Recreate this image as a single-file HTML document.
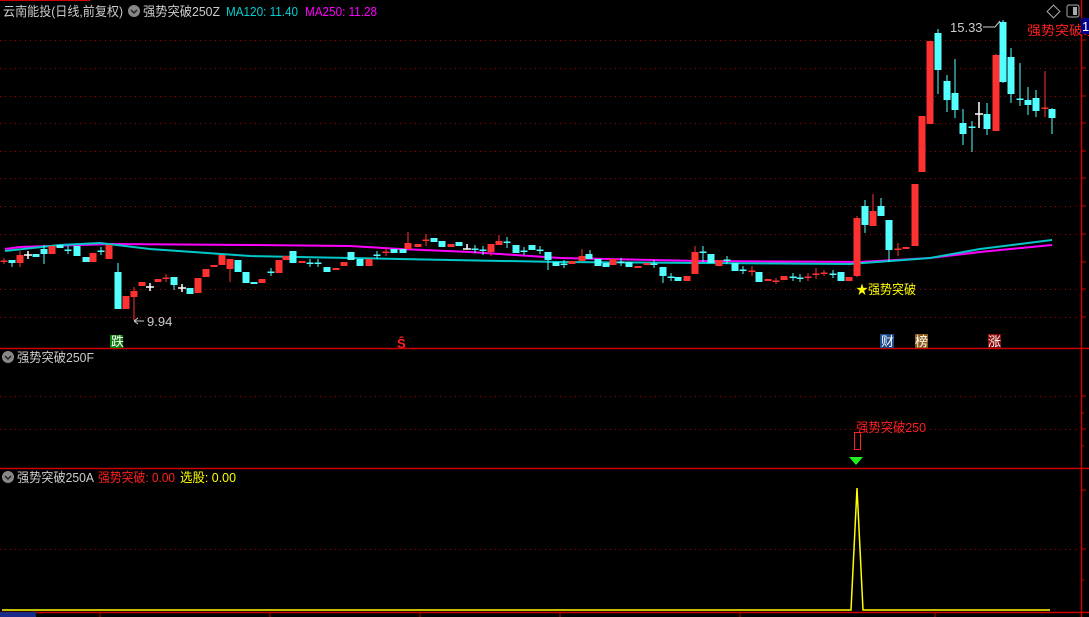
<!DOCTYPE html>
<html><head><meta charset="utf-8"><style>
body{margin:0;background:#000;width:1089px;height:617px;overflow:hidden}
svg{display:block}
text{font-family:"Liberation Sans","Noto Sans CJK SC",sans-serif;font-size:13px}
</style></head><body>
<svg width="1089" height="617" viewBox="0 0 1089 617" xmlns="http://www.w3.org/2000/svg">
<rect width="1089" height="617" fill="#000"/>
<line x1="0" y1="0.5" x2="90" y2="0.5" stroke="#c00"/>
<g stroke="#a00000" stroke-dasharray="1 4" stroke-width="1">
<line x1="0" y1="40.5" x2="1080" y2="40.5"/><line x1="0" y1="68.5" x2="1080" y2="68.5"/><line x1="0" y1="96.5" x2="1080" y2="96.5"/><line x1="0" y1="123.5" x2="1080" y2="123.5"/><line x1="0" y1="151.5" x2="1080" y2="151.5"/><line x1="0" y1="178.5" x2="1080" y2="178.5"/><line x1="0" y1="206.5" x2="1080" y2="206.5"/><line x1="0" y1="234.5" x2="1080" y2="234.5"/><line x1="0" y1="289.5" x2="1080" y2="289.5"/><line x1="0" y1="317.5" x2="1080" y2="317.5"/>
<line x1="0" y1="396.5" x2="1080" y2="396.5"/><line x1="0" y1="429.5" x2="1080" y2="429.5"/>
<line x1="0" y1="549.5" x2="1080" y2="549.5"/>
</g>
<g stroke="#c00" stroke-width="1.5">
<line x1="0" y1="348.5" x2="1089" y2="348.5"/><line x1="0" y1="468.5" x2="1089" y2="468.5"/><line x1="0" y1="612.5" x2="1089" y2="612.5"/>
<line x1="1081.5" y1="0" x2="1081.5" y2="617"/>
</g>
<g stroke="#c00"><path d="M1081 40h5M1081 68h5M1081 96h5M1081 123h5M1081 151h5M1081 178h5M1081 206h5M1081 234h5M1081 262h5M1081 289h5M1081 317h5M1081 396h5M1081 413h3M1081 429h5M1081 446h3M1081 490h5M1081 549h5M1081 580h3M100 612v5M270 612v5M420 612v5M560 612v5M740 612v5M935 612v5"/></g>
<polyline fill="none" stroke="#ff00ff" stroke-width="2" points="5,249 20,247 110,244 250,245 350,246 400,249 470,252 560,258 700,261 860,262 930,258 980,252 1052,245"/>
<polyline fill="none" stroke="#00c8c8" stroke-width="2" points="5,251 60,245 100,243 150,249 250,256 350,258 450,260 560,262 700,263 850,264 930,258 980,249 1052,240"/>
<g fill="#ff3232" stroke="#ff3232" stroke-width="1">
<path fill="none" d="M20 251V267M134 287V320M230 259V282M408 232V249M426 234V246M491 244V256M499 235V245M582 249V261M695 246V274M873 194V226M1045 71V117M752 266V276M898 243V256M816 268V279M857 216V277M996 54V131M166 274V282M386 248V256M776 278V284M808 273V281M824 270V276M4 258V264"/>
<g stroke="none">
<rect x="16.5" y="255" width="7" height="8"/><rect x="48.5" y="246" width="7" height="8"/><rect x="89.5" y="253" width="7" height="9"/><rect x="105.5" y="245" width="7" height="14"/><rect x="122.5" y="296" width="7" height="13"/><rect x="130.5" y="291" width="7" height="6"/><rect x="138.5" y="282" width="7" height="4"/><rect x="154.5" y="279" width="7" height="3"/><rect x="194.5" y="278" width="7" height="15"/><rect x="202.5" y="269" width="7" height="8"/><rect x="210.5" y="265" width="7" height="2"/><rect x="218.5" y="255" width="7" height="10"/><rect x="226.5" y="259" width="7" height="10"/><rect x="258.5" y="279" width="7" height="4"/><rect x="275.5" y="260" width="7" height="13"/><rect x="282.5" y="256" width="7" height="4"/><rect x="298.5" y="261" width="7" height="2"/><rect x="332.5" y="268" width="7" height="2"/><rect x="340.5" y="262" width="7" height="4"/><rect x="365.5" y="259" width="7" height="7"/><rect x="404.5" y="243" width="7" height="6"/><rect x="414.5" y="244" width="7" height="3"/><rect x="447.5" y="244" width="7" height="3"/><rect x="487.5" y="244" width="7" height="8"/><rect x="495.5" y="241" width="7" height="4"/><rect x="568.5" y="261" width="7" height="3"/><rect x="578.5" y="256" width="7" height="5"/><rect x="609.5" y="259" width="7" height="6"/><rect x="634.5" y="266" width="7" height="2"/><rect x="643.5" y="263" width="7" height="2"/><rect x="683.5" y="276" width="7" height="5"/><rect x="691.5" y="252" width="7" height="22"/><rect x="715.5" y="260" width="7" height="6"/><rect x="764.5" y="279" width="7" height="2"/><rect x="780.5" y="276" width="7" height="4"/><rect x="845.5" y="277" width="7" height="4"/><rect x="853.5" y="218" width="7" height="58"/><rect x="869.5" y="211" width="7" height="15"/><rect x="902.5" y="247" width="7" height="2"/><rect x="911.5" y="184" width="7" height="62"/><rect x="918.5" y="116" width="7" height="56"/><rect x="926.5" y="41" width="7" height="83"/><rect x="992.5" y="55" width="7" height="76"/>
<rect x="0.5" y="260.5" width="7" height="1.5"/><rect x="162.5" y="277.5" width="7" height="1.5"/><rect x="382.5" y="251.5" width="7" height="1.5"/><rect x="422.5" y="239.5" width="7" height="1.5"/><rect x="748.5" y="270.5" width="7" height="1.5"/><rect x="772.5" y="280.5" width="7" height="1.5"/><rect x="804.5" y="276.5" width="7" height="1.5"/><rect x="812.5" y="273.5" width="7" height="1.5"/><rect x="820.5" y="272.5" width="7" height="1.5"/><rect x="894.5" y="248.5" width="7" height="1.5"/><rect x="1041.5" y="107.5" width="7" height="1.5"/>
</g></g>
<g fill="#54ffff" stroke="#54ffff" stroke-width="1">
<path fill="none" d="M44 245V264M118 263V309M548 252V270M663 267V283M865 200V233M881 198V216M889 220V262M938 29V94M947 75V112M955 59V118M963 109V145M972 121V152M987 103V135M1003 20V83M1011 48V103M1020 63V106M1028 87V115M1036 90V117M1052 108V134M703 246V262M507 237V248M12 260V267M68 246V254M101 247V255M271 268V276M310 259V267M318 259V267M377 251V259M475 245V253M483 246V255M524 247V255M540 246V254M564 260V268M621 258V266M654 260V268M671 273V281M727 256V264M743 266V274M793 273V281M800 274V282M833 270V278M174 277V290M590 250V259"/>
<g stroke="none">
<rect x="8.5" y="260" width="7" height="3"/><rect x="32.5" y="254" width="7" height="3"/><rect x="40.5" y="249" width="7" height="5"/><rect x="56.5" y="245" width="7" height="3"/><rect x="73.5" y="246" width="7" height="10"/><rect x="82.5" y="257" width="7" height="5"/><rect x="114.5" y="272" width="7" height="37"/><rect x="170.5" y="277" width="7" height="8"/><rect x="186.5" y="288" width="7" height="6"/><rect x="234.5" y="260" width="7" height="12"/><rect x="242.5" y="272" width="7" height="11"/><rect x="250.5" y="282" width="7" height="2"/><rect x="289.5" y="251" width="7" height="12"/><rect x="323.5" y="267" width="7" height="5"/><rect x="347.5" y="252" width="7" height="8"/><rect x="356.5" y="259" width="7" height="7"/><rect x="390.5" y="249" width="7" height="4"/><rect x="399.5" y="249" width="7" height="4"/><rect x="430.5" y="238" width="7" height="4"/><rect x="438.5" y="241" width="7" height="6"/><rect x="455.5" y="242" width="7" height="4"/><rect x="512.5" y="245" width="7" height="8"/><rect x="528.5" y="245" width="7" height="5"/><rect x="544.5" y="252" width="7" height="8"/><rect x="552.5" y="262" width="7" height="4"/><rect x="585.5" y="254" width="7" height="5"/><rect x="594.5" y="259" width="7" height="7"/><rect x="602.5" y="263" width="7" height="4"/><rect x="625.5" y="262" width="7" height="5"/><rect x="659.5" y="267" width="7" height="9"/><rect x="674.5" y="277" width="7" height="4"/><rect x="707.5" y="254" width="7" height="9"/><rect x="731.5" y="263" width="7" height="8"/><rect x="755.5" y="272" width="7" height="10"/><rect x="837.5" y="272" width="7" height="9"/><rect x="861.5" y="206" width="7" height="19"/><rect x="877.5" y="206" width="7" height="10"/><rect x="885.5" y="220" width="7" height="30"/><rect x="934.5" y="33" width="7" height="37"/><rect x="943.5" y="81" width="7" height="19"/><rect x="951.5" y="93" width="7" height="17"/><rect x="959.5" y="123" width="7" height="11"/><rect x="983.5" y="114" width="7" height="15"/><rect x="999.5" y="22" width="7" height="60"/><rect x="1007.5" y="57" width="7" height="37"/><rect x="1024.5" y="100" width="7" height="5"/><rect x="1032.5" y="98" width="7" height="13"/><rect x="1048.5" y="109" width="7" height="9"/>
<rect x="64.5" y="249.5" width="7" height="1.5"/><rect x="97.5" y="250.5" width="7" height="1.5"/><rect x="267.5" y="271.5" width="7" height="1.5"/><rect x="306.5" y="262.5" width="7" height="1.5"/><rect x="314.5" y="262.5" width="7" height="1.5"/><rect x="373.5" y="254.5" width="7" height="1.5"/><rect x="471.5" y="248.5" width="7" height="1.5"/><rect x="479.5" y="249.5" width="7" height="1.5"/><rect x="503.5" y="241.5" width="7" height="1.5"/><rect x="520.5" y="250.5" width="7" height="1.5"/><rect x="536.5" y="249.5" width="7" height="1.5"/><rect x="560.5" y="263.5" width="7" height="1.5"/><rect x="617.5" y="261.5" width="7" height="1.5"/><rect x="650.5" y="263.5" width="7" height="1.5"/><rect x="667.5" y="276.5" width="7" height="1.5"/><rect x="699.5" y="251.5" width="7" height="1.5"/><rect x="723.5" y="259.5" width="7" height="1.5"/><rect x="739.5" y="269.5" width="7" height="1.5"/><rect x="789.5" y="276.5" width="7" height="1.5"/><rect x="796.5" y="277.5" width="7" height="1.5"/><rect x="829.5" y="273.5" width="7" height="1.5"/><rect x="968.5" y="126.5" width="7" height="1.5"/><rect x="1016.5" y="98.5" width="7" height="1.5"/>
</g></g>
<g stroke="#fff" stroke-width="1.5" fill="none"><path d="M24 255h8M28 251v8M146 287h8M150 283v8M178 288h8M182 284v8M463 249h8M467 244v5M975 114h8M979 102v26"/></g>
<path d="M134 321h10M134 321l4-3M134 321l4 3" stroke="#ccc" fill="none"/>
<text x="147" y="326" fill="#ccc" font-size="12">9.94</text>
<text x="950" y="32" fill="#ccc" font-size="12">15.33</text>
<path d="M983 27h12l5-6" stroke="#ccc" fill="none"/>
<text x="1027" y="35" fill="#ff2020" textLength="70" lengthAdjust="spacingAndGlyphs">强势突破系</text>
<rect x="1081" y="18" width="8" height="16" fill="#00008a"/>
<text x="1082" y="31" fill="#fff" font-size="12">1</text>
<rect x="1049" y="7" width="9" height="9" transform="rotate(45 1053.5 11.5)" fill="none" stroke="#aaa"/>
<rect x="1067" y="5" width="12" height="12" fill="none" stroke="#aaa" rx="2"/><rect x="1073" y="7" width="4" height="8" fill="#aaa"/>
<text x="856" y="294" fill="#ffff00" textLength="60" lengthAdjust="spacingAndGlyphs">★强势突破</text>
<rect x="110" y="335" width="13" height="13" fill="#0a7a0a"/><text x="111" y="346" fill="#fff" font-size="12">跌</text>
<text x="397" y="348" fill="#ff2020" font-size="12" font-weight="bold">Ŝ</text>
<rect x="880" y="334" width="14" height="14" fill="#1a4a8a"/><text x="881" y="346" fill="#fff" font-size="12">财</text>
<rect x="915" y="334" width="13" height="14" fill="#8a5a1a"/><text x="915" y="346" fill="#fff" font-size="12">榜</text>
<rect x="988" y="334" width="13" height="14" fill="#8a0a0a"/><text x="988" y="346" fill="#fff" font-size="12">涨</text>
<text x="3" y="16" fill="#ccc" textLength="120" lengthAdjust="spacingAndGlyphs">云南能投(日线,前复权)</text>
<circle cx="134" cy="11" r="6" fill="#888"/><path d="M131 10l3 3 3-3" stroke="#222" fill="none" stroke-width="1.5"/>
<text x="143" y="16" fill="#ccc" textLength="77" lengthAdjust="spacingAndGlyphs">强势突破250Z</text>
<text x="226" y="16" fill="#00d0d0" textLength="72" lengthAdjust="spacingAndGlyphs">MA120: 11.40</text>
<text x="305" y="16" fill="#ff00ff" textLength="72" lengthAdjust="spacingAndGlyphs">MA250: 11.28</text>
<circle cx="8" cy="357" r="6" fill="#888"/><path d="M5 356l3 3 3-3" stroke="#222" fill="none" stroke-width="1.5"/>
<text x="17" y="362" fill="#ccc" textLength="77" lengthAdjust="spacingAndGlyphs">强势突破250F</text>
<text x="856" y="432" fill="#ff2020" textLength="70" lengthAdjust="spacingAndGlyphs">强势突破250</text>
<rect x="854.5" y="432.5" width="6" height="17" fill="none" stroke="#ff2020"/>
<path d="M849 457h14l-7 8z" fill="#22ee22"/>
<circle cx="8" cy="477" r="6" fill="#888"/><path d="M5 476l3 3 3-3" stroke="#222" fill="none" stroke-width="1.5"/>
<text x="17" y="482" fill="#ccc" textLength="77" lengthAdjust="spacingAndGlyphs">强势突破250A</text>
<text x="98" y="482" fill="#ff2020" textLength="77" lengthAdjust="spacingAndGlyphs">强势突破: 0.00</text>
<text x="180" y="482" fill="#ffff00" textLength="56" lengthAdjust="spacingAndGlyphs">选股: 0.00</text>
<polyline fill="none" stroke="#ffff00" stroke-width="1.5" points="2,610 851,610 857,488 863,610 1050,610"/>
<rect x="0" y="612" width="36" height="5" fill="#1a2a8a"/>
</svg>
</body></html>
